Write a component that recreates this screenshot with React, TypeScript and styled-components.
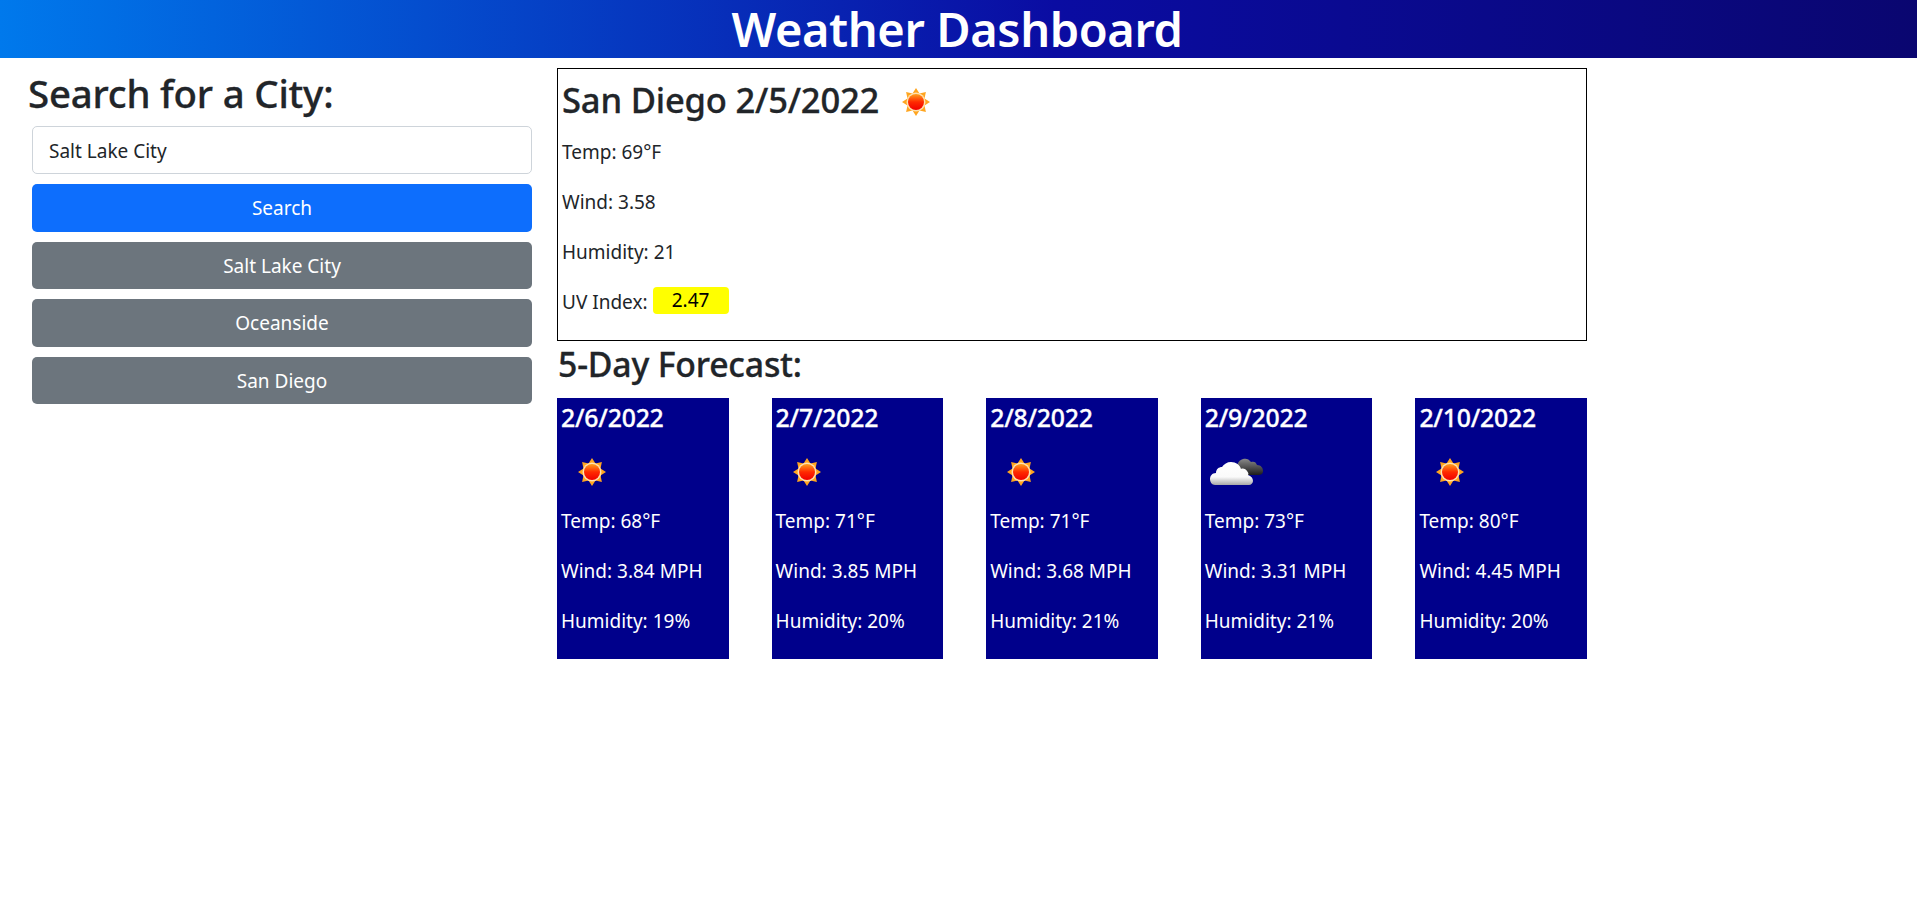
import React from 'react';
import styled, { createGlobalStyle } from 'styled-components';

interface Day {
  date: string;
  icon: 'sun' | 'clouds';
  temp: string;
  wind: string;
  humidity: string;
}

const days: Day[] = [
  { date: '2/6/2022', icon: 'sun', temp: '68', wind: '3.84', humidity: '19' },
  { date: '2/7/2022', icon: 'sun', temp: '71', wind: '3.85', humidity: '20' },
  { date: '2/8/2022', icon: 'sun', temp: '71', wind: '3.68', humidity: '21' },
  { date: '2/9/2022', icon: 'clouds', temp: '73', wind: '3.31', humidity: '21' },
  { date: '2/10/2022', icon: 'sun', temp: '80', wind: '4.45', humidity: '20' },
];

const cities = ['Salt Lake City', 'Oceanside', 'San Diego'];

const GlobalStyle = createGlobalStyle`
  html, body {
    margin: 0;
    padding: 0;
    background: #fff;
    color: #212529;
    font-family: "Noto Sans", "Open Sans", sans-serif;
    font-size: 19px;
  }
  * {
    box-sizing: border-box;
  }
  h2, h3, h4 {
    font-weight: 500;
    letter-spacing: -0.2px;
    -webkit-text-stroke: 0.3px currentColor;
  }
`;

const Header = styled.header`
  height: 58px;
  padding-right: 3px;
  background: linear-gradient(90deg, #0079ec, #0a0ca2 55%, #0a0670);
  color: #fff;
  text-align: center;
  font-size: 47px;
  font-weight: 600;
  line-height: 59px;
  letter-spacing: -0.4px;
`;

const Content = styled.div`
  display: flex;
  align-items: flex-start;
  padding: 10px 0 0 32px;
`;

const Sidebar = styled.aside`
  flex: none;
  width: 500px;
  margin-right: 25px;
`;

const SideTitle = styled.h2`
  margin: 0 0 12px -4px;
  height: 46px;
  font-size: 38.4px;
  line-height: 50px;
`;

const CityInput = styled.input`
  display: block;
  width: 100%;
  height: 48px;
  margin-bottom: 10px;
  padding: 2px 16px 0;
  border: 1px solid #ced4da;
  border-radius: 5px;
  color: #212529;
  font: inherit;
`;

const Button = styled.button<{ $primary?: boolean }>`
  display: block;
  width: 100%;
  height: 47.5px;
  margin-bottom: 10px;
  padding: 1px 0 0;
  border: 0;
  border-radius: 5px;
  background: ${(p) => (p.$primary ? '#0d6efd' : '#6c757d')};
  color: #fff;
  font: inherit;
`;

const Main = styled.main`
  flex: none;
  width: 1030px;
`;

const Current = styled.section`
  height: 273px;
  padding: 0 4px;
  border: 1px solid #000;
`;

const CurrentTitle = styled.h2`
  display: flex;
  align-items: center;
  height: 60px;
  margin: 0 0 8px;
  font-size: 34.6px;
`;

const TitleIcon = styled.span`
  display: flex;
  margin: 6px 0 0 7px;
`;

const Line = styled.p`
  height: 30px;
  margin: 0 0 20px;
  line-height: 30px;
`;

const UvBadge = styled.span`
  display: inline-block;
  width: 76px;
  height: 27px;
  margin-left: 5px;
  border-radius: 4px;
  background: #ff0;
  color: #000;
  text-align: center;
  line-height: 27px;
  vertical-align: 2px;
`;

const ForecastTitle = styled.h3`
  height: 57px;
  margin: 0;
  padding-left: 1px;
  font-size: 33.8px;
  line-height: 46px;
`;

const Cards = styled.div`
  display: flex;
  justify-content: space-between;
`;

const Card = styled.article`
  width: 171.6px;
  height: 261px;
  padding: 0 4px;
  background: #00008b;
  color: #fff;
`;

const CardDate = styled.h4`
  height: 44px;
  margin: 0;
  font-size: 24.8px;
  line-height: 39px;
`;

const CardIcon = styled.div`
  display: flex;
  height: 60px;
  margin: 0 0 4px 1px;
`;

const SunIcon = () => (
  <svg width="60" height="60" viewBox="0 0 60 60">
    <defs>
      <linearGradient id="sunDisc" x1="0" y1="0" x2="0" y2="1">
        <stop offset="0" stopColor="#ffa01e" />
        <stop offset="0.5" stopColor="#ff2a00" />
        <stop offset="1" stopColor="#f00000" />
      </linearGradient>
    </defs>
    <polygon
      points="30,16 33.5,21.5 39.9,20.1 38.5,26.5 44,30 38.5,33.5 39.9,39.9 33.5,38.5 30,44 26.5,38.5 20.1,39.9 21.5,33.5 16,30 21.5,26.5 20.1,20.1 26.5,21.5"
      fill="#ffa51f"
    />
    <circle cx="30" cy="30" r="9.5" fill="#ffe2b0" />
    <circle cx="30" cy="30" r="8" fill="url(#sunDisc)" />
  </svg>
);

const CloudsIcon = () => (
  <svg width="60" height="60" viewBox="0 0 60 60">
    <defs>
      <linearGradient id="cloudDark" x1="0" y1="0" x2="0" y2="1">
        <stop offset="0" stopColor="#8a8a8a" />
        <stop offset="1" stopColor="#1c1c1c" />
      </linearGradient>
      <linearGradient id="cloudLight" x1="0" y1="0" x2="0" y2="1">
        <stop offset="0" stopColor="#fff" />
        <stop offset="0.65" stopColor="#fafafa" />
        <stop offset="1" stopColor="#a8a8a8" />
      </linearGradient>
    </defs>
    <path
      d="M32 31c-3-6 0-13 5-14 3-1 6 0 8 3 3-1 5 0 6 3 4 0 6 3 6 6 0 3-2 4-5 4H36c-2 0-3-1-4-2z"
      fill="url(#cloudDark)"
    />
    <path
      d="M9 43c-3 0-5-3-5-6 0-3 2-6 6-6 0-4 3-6 6-6 2-3 5-5 9-5 5 0 9 3 10 7 2-1 5 0 6 2 1 1 2 3 1 4 3 1 5 3 5 6 0 2-2 4-4 4z"
      fill="url(#cloudLight)"
    />
  </svg>
);

const App = () => (
  <>
    <GlobalStyle />
    <Header>Weather Dashboard</Header>
    <Content>
      <Sidebar>
        <SideTitle>Search for a City:</SideTitle>
        <CityInput defaultValue="Salt Lake City" />
        <Button $primary>Search</Button>
        {cities.map((city) => (
          <Button key={city}>{city}</Button>
        ))}
      </Sidebar>
      <Main>
        <Current>
          <CurrentTitle>
            San Diego 2/5/2022
            <TitleIcon>
              <SunIcon />
            </TitleIcon>
          </CurrentTitle>
          <Line>Temp: 69°F</Line>
          <Line>Wind: 3.58</Line>
          <Line>Humidity: 21</Line>
          <Line>
            UV Index:<UvBadge>2.47</UvBadge>
          </Line>
        </Current>
        <ForecastTitle>5-Day Forecast:</ForecastTitle>
        <Cards>
          {days.map((day) => (
            <Card key={day.date}>
              <CardDate>{day.date}</CardDate>
              <CardIcon>{day.icon === 'sun' ? <SunIcon /> : <CloudsIcon />}</CardIcon>
              <Line>Temp: {day.temp}°F</Line>
              <Line>Wind: {day.wind} MPH</Line>
              <Line>Humidity: {day.humidity}%</Line>
            </Card>
          ))}
        </Cards>
      </Main>
    </Content>
  </>
);

export default App;
